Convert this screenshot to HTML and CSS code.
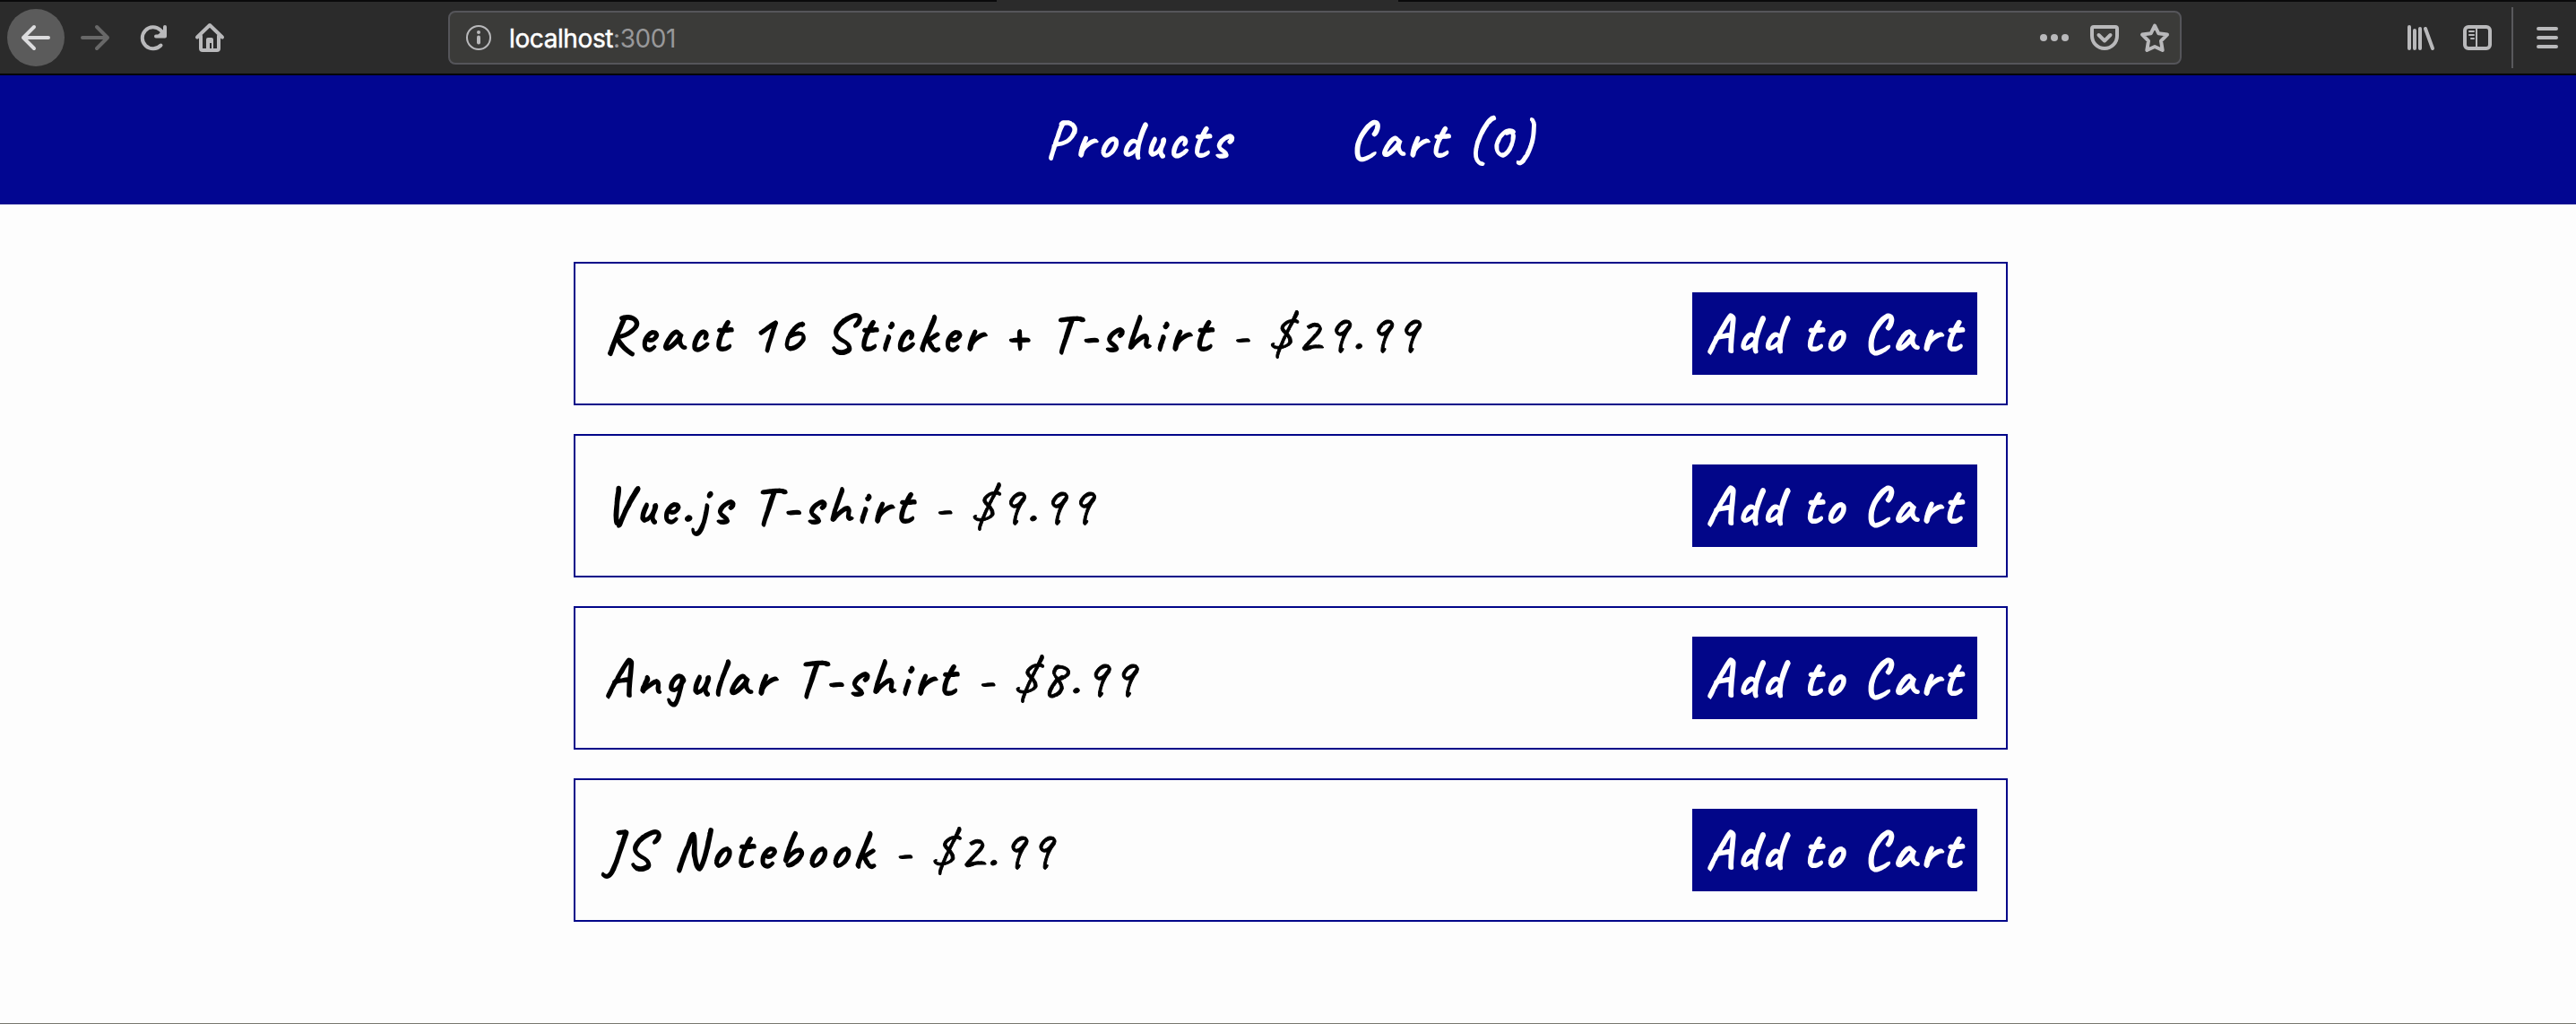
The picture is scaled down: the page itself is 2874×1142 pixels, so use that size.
FILE: index.html
```html
<!DOCTYPE html>
<html lang="en">
<head>
<meta charset="utf-8">
<title>Shop</title>
<link rel="stylesheet" href="styles.css">
</head>
<body>
<div class="toolbar">
  <div class="nav-buttons">
    <span class="back"><svg width="40" height="40" viewBox="0 0 40 40"><path d="M34 20H6M18 8L6 20l12 12"/></svg></span>
    <svg class="forward" width="40" height="40" viewBox="0 0 40 40"><path d="M6 20h28M22 8l12 12-12 12"/></svg>
    <svg class="reload" width="40" height="40" viewBox="0 0 40 40"><path d="M29.500 28.500A12 12 0 1 1 29 11.500L32 15"/><path d="M34 8v10.500H24"/><path class="solid" d="M33 10v8h-8z"/></svg>
    <svg class="home" width="40" height="40" viewBox="0 0 40 40"><path d="M6 19.500L20 6l14 13.500M10 18v14q0 2 2 2h16q2 0 2-2V18"/><path class="solid" d="M16 34V22q0-2 2-2h4q2 0 2 2v12h-2v-8h-2v8z"/></svg>
  </div>
  <div class="address">
    <svg class="info" width="30" height="30" viewBox="0 0 30 30"><circle cx="15" cy="15" r="13"/><circle class="solid" cx="15" cy="9" r="2"/><path class="stem" d="M15 14.500v6"/></svg>
    <span class="url"><b>localhost</b>:3001</span>
    <span class="page-actions">
      <svg width="34" height="34" viewBox="0 0 34 34"><circle class="solid" cx="5" cy="17" r="4"/><circle class="solid" cx="17" cy="17" r="4"/><circle class="solid" cx="29" cy="17" r="4"/></svg>
      <svg width="34" height="34" viewBox="0 0 34 34"><path d="M5 5h24q2 0 2 2v8a14 14 0 0 1-28 0V7q0-2 2-2zM10.500 14l6.500 6.500 6.500-6.500"/></svg>
      <svg width="34" height="34" viewBox="0 0 34 34"><path d="M17 3.500l4.200 8.700 9.800 1.400-7 7 1.700 10.400L17 27l-8.700 4L10 20.600l-7-7 9.800-1.400z"/></svg>
    </span>
  </div>
  <div class="tools">
    <svg width="34" height="34" viewBox="0 0 34 34"><path d="M5 5v24M11 9v20M17 7v22M23 7l8 22"/></svg>
    <svg class="sidebar" width="34" height="34" viewBox="0 0 34 34"><rect x="3" y="5" width="28" height="24" rx="4"/><path class="thin" d="M16 6v22M8 10h5M8 14h5M10 18h3"/></svg>
    <span class="divider"></span>
    <svg class="menu" width="28" height="28" viewBox="0 0 28 28"><path d="M4 4h20M4 14h20M4 24h20"/></svg>
  </div>
</div>
<nav class="main-nav">
  <a>Products</a>
  <a>Cart (0)</a>
</nav>
<main class="products">
  <div class="product"><div><strong>React 16 Sticker + T-shirt</strong> - $29.99</div><button>Add to Cart</button></div>
  <div class="product"><div><strong>Vue.js T-shirt</strong> - $9.99</div><button>Add to Cart</button></div>
  <div class="product"><div><strong>Angular T-shirt</strong> - $8.99</div><button>Add to Cart</button></div>
  <div class="product"><div><strong>JS Notebook</strong> - $2.99</div><button>Add to Cart</button></div>
</main>
</body>
</html>
```
FILE: styles.css
```css
* { box-sizing: border-box; }

body {
  margin: 0;
  height: 1142px;
  overflow: hidden;
  background: #fdfdfd;
  border-bottom: 1px solid #77776f;
  font-family: Caveat, cursive;
  font-size: 60px;
  letter-spacing: 4px;
  color: #000;
}

svg {
  display: block;
  flex: none;
  fill: none;
  stroke: #b9b9bb;
  stroke-width: 4;
  stroke-linecap: round;
  stroke-linejoin: round;
}

.solid { fill: #b9b9bb; stroke: none; }

/* the dark top edge is open below the active tab */
.toolbar {
  display: flex;
  height: 84px;
  padding-top: 2px;
  border-bottom: 2px solid #050505;
  background:
    linear-gradient(90deg, #0a0a0b 1112px, transparent 1112px 1560px, #0a0a0b 1560px) 0 0 / 100% 2px no-repeat,
    #2b2b2b;
  align-items: center;
}

.nav-buttons {
  display: flex;
  align-items: center;
  width: 500px;
  padding-left: 8px;
}

.back {
  display: flex;
  align-items: center;
  justify-content: center;
  width: 64px;
  height: 64px;
  border-radius: 50%;
  background: #5b5b5b;
}
.back svg { stroke: #dcdcde; }
.forward { margin-left: 14px; stroke: #686868; }
.reload { margin-left: 24px; }
.home { margin-left: 24px; }

.address {
  display: flex;
  align-items: center;
  width: 1934px;
  height: 60px;
  border: 2px solid #55555a;
  border-radius: 8px;
  background: #3b3b39;
  padding: 0 11px 0 17px;
}
.info { stroke-width: 2; }
.info .stem { stroke-width: 4; }

.url {
  margin-left: 19px;
  padding-top: 2px;
  font-family: Inter, sans-serif;
  font-size: 28px;
  letter-spacing: -0.4px;
  color: #98989a;
}
.url b { font-weight: 400; color: #fff; -webkit-text-stroke: 0.5px; }

.page-actions { display: flex; gap: 22px; margin-left: auto; }

.tools { display: flex; align-items: center; margin-left: 249px; }
.sidebar { margin-left: 30px; }
.thin { stroke-width: 2; }
.divider { width: 2px; height: 68px; margin-left: 21px; background: #59595c; }
.menu { margin-left: 24px; }

.main-nav {
  display: flex;
  height: 144px;
  padding: 34px 0 0 1166px;
  gap: 130px;
  background: #020691;
  color: #fff;
  -webkit-text-stroke: 1.6px;
}

.products {
  display: grid;
  gap: 32px;
  width: 1600px;
  margin: 64px 0 0 640px;
}
.product {
  display: flex;
  justify-content: space-between;
  align-items: center;
  height: 160px;
  padding: 0 32px;
  border: 2px solid #020689;
  font-kerning: none;
  -webkit-text-stroke: 0.9px;
}
.product strong {
  font-weight: 400;
  letter-spacing: 5px;
  -webkit-text-stroke: 1.8px;
}
.product button {
  width: 318px;
  height: 92px;
  padding: 0;
  border: 0;
  background: #020689;
  color: #fff;
  font: 60px Caveat, cursive;
  letter-spacing: 4px;
  -webkit-text-stroke: 2px;
}
```
